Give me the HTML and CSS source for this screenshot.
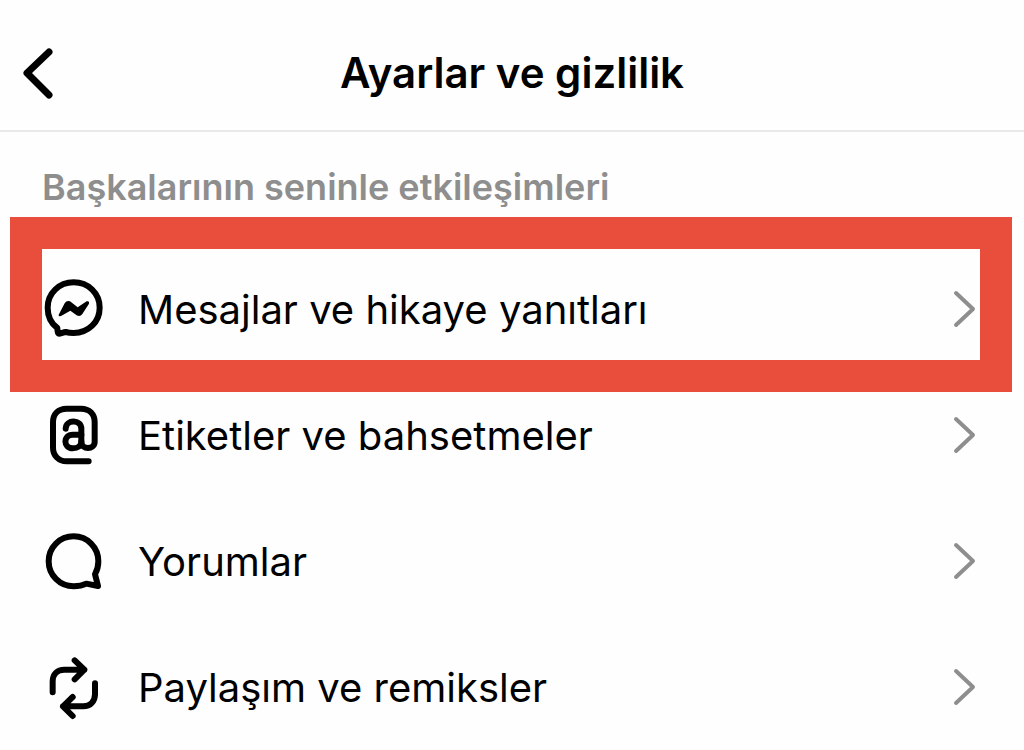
FILE: index.html
```html
<!DOCTYPE html>
<html lang="tr">
<head>
    <meta charset="UTF-8">
    <meta name="viewport" content="width=device-width, initial-scale=1.0">
    <title>Ayarlar ve gizlilik</title>
    <link rel="stylesheet" href="styles.css">
</head>
<body>
    <header class="header">
        <button class="back" type="button" aria-label="Geri">
            <svg viewBox="0 0 32 54" fill="none" stroke="currentColor" stroke-width="7" stroke-linecap="round" stroke-linejoin="round">
                <path d="M27 6L5 27L27 49"/>
            </svg>
        </button>
        <h1 class="title">Ayarlar ve gizlilik</h1>
    </header>

    <main>
        <h2 class="section-title">Başkalarının seninle etkileşimleri</h2>
        <nav class="menu">
            <a class="menu-item highlighted" href="#mesajlar">
                <svg class="icon" viewBox="0 0 180 180">
                    <path d="M89 10C133 10 167 43 167 86C167 129 133 162 89 162C80 162 72 161 65 159C58 160 50 164 45 164C40 164 41 156 40 147C20 132 11 111 11 86C11 43 45 10 89 10Z"/>
                    <path class="solid" d="M44 107L62 73Q68 63 78 67L101 85L128 67Q137 65 135 74L115 105Q109 114 98 109L79 95L51 111Q43 113 44 107Z"/>
                </svg>
                <span class="label">Mesajlar ve hikaye yanıtları</span>
                <svg class="chevron" viewBox="0 0 24 40"><path d="M4 4L21 20L4 36"/></svg>
            </a>
            <a class="menu-item" href="#etiketler">
                <svg class="icon" viewBox="0 0 180 180">
                    <path d="M134 169H68C44 169 27 152 27 128V52C27 27 43 11 68 11H111C136 11 152 27 152 52V110C152 135 112 135 112 110V72C112 42 66 42 65 71"/>
                    <path d="M112 89H86C57 89 57 130 86 130C102 130 112 122 112 110"/>
                </svg>
                <span class="label">Etiketler ve bahsetmeler</span>
                <svg class="chevron" viewBox="0 0 24 40"><path d="M4 4L21 20L4 36"/></svg>
            </a>
            <a class="menu-item" href="#yorumlar">
                <svg class="icon" viewBox="0 0 180 180">
                    <path d="M153 130L162 165L127 158C117 163 103 166 89 166C47 166 14 132 14 91C14 49 47 16 89 16C130 16 163 49 163 91C163 105 160 118 153 130Z"/>
                </svg>
                <span class="label">Yorumlar</span>
                <svg class="chevron" viewBox="0 0 24 40"><path d="M4 4L21 20L4 36"/></svg>
            </a>
            <a class="menu-item" href="#paylasim">
                <svg class="icon" viewBox="0 0 180 180">
                    <path d="M26 106V73C26 52 40 38 61 38H121M92 10L121 38L92 67"/>
                    <path d="M153 79V112C153 133 139 148 118 148H57M86 120L57 148L86 177"/>
                </svg>
                <span class="label">Paylaşım ve remiksler</span>
                <svg class="chevron" viewBox="0 0 24 40"><path d="M4 4L21 20L4 36"/></svg>
            </a>
        </nav>
    </main>
</body>
</html>
```
FILE: styles.css
```css
* {
    margin: 0;
    padding: 0;
    box-sizing: border-box;
}

body {
    font-family: Inter, 'Liberation Sans', sans-serif;
    background: #fefefe;
    color: #000;
    overflow-x: hidden;
}

.header {
    display: grid;
    grid-template-columns: 1fr auto 1fr;
    align-items: center;
    padding: 44px 22px 28px;
    border-bottom: 2px solid #e9e9e9;
}

.back {
    justify-self: start;
    display: flex;
    background: none;
    border: none;
    color: inherit;
    cursor: pointer;
}

.back svg {
    width: 32px;
    height: 54px;
}

.title {
    font-size: 42px;
    font-weight: 600;
    line-height: 58px;
}

.section-title {
    padding: 31px 42px 35px;
    font-size: 36px;
    font-weight: 600;
    line-height: 48px;
    color: #8e8e8e;
}

.menu-item {
    position: relative;
    display: flex;
    align-items: center;
    gap: 34px;
    min-height: 126px;
    padding: 0 48px 0 44px;
    color: inherit;
    text-decoration: none;
}

/* red frame around the selected setting */
.highlighted::before {
    content: '';
    position: absolute;
    inset: -29px 12px -20px 10px;
    border: 32px solid #e94d3c;
    pointer-events: none;
}

.icon {
    flex: none;
    width: 60px;
    height: 60px;
    overflow: visible;
    fill: none;
    stroke: #000;
    stroke-width: 18;
    stroke-linecap: round;
    stroke-linejoin: round;
}

.icon .solid {
    fill: #000;
    stroke: none;
}

.label {
    flex: 1;
    padding-top: 2px;
    font-size: 40px;
    line-height: 52px;
}

.chevron {
    flex: none;
    width: 24px;
    height: 40px;
    fill: none;
    stroke: #8e8e8e;
    stroke-width: 4;
    stroke-linecap: round;
    stroke-linejoin: round;
}
```
